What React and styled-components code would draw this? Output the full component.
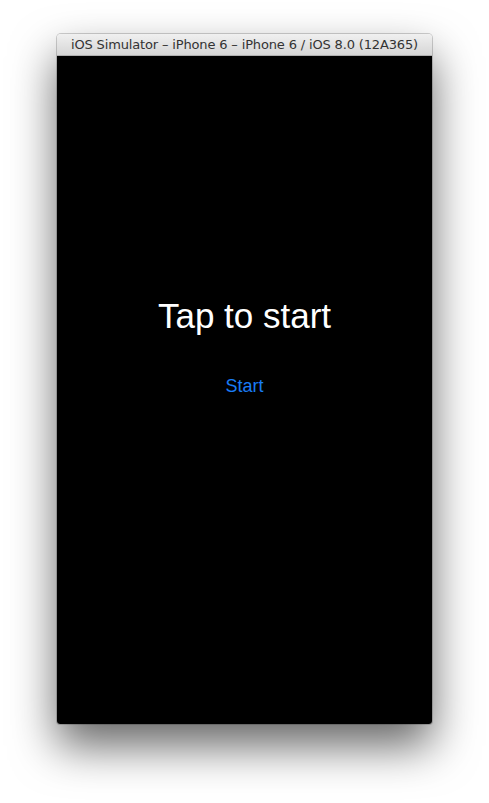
import React from "react";
import styled, { createGlobalStyle } from "styled-components";

const GlobalStyle = createGlobalStyle`
  html, body {
    margin: 0;
    padding: 0;
    background: #ffffff;
  }
`;

const Page = styled.div`
  width: 489px;
  height: 803px;
  display: flex;
  justify-content: center;
  padding-top: 34px;
  box-sizing: border-box;
`;

const Window = styled.div`
  width: 375px;
  display: flex;
  flex-direction: column;
  border-radius: 4px 4px 3px 3px;
  box-shadow: 0 22px 45px rgba(0, 0, 0, 0.6), 0 0 0 1px rgba(0, 0, 0, 0.18);
  height: 690px;
  overflow: hidden;
`;

const TitleBar = styled.div`
  height: 22px;
  flex-shrink: 0;
  display: flex;
  align-items: center;
  justify-content: center;
  background: linear-gradient(#f0f0f0, #d6d6d6);
  border-bottom: 1px solid #b0b0b0;
  box-sizing: border-box;
  font-family: "DejaVu Sans", sans-serif;
  font-size: 13px;
  color: #333333;
  letter-spacing: -0.15px;
`;

const Screen = styled.div`
  flex: 1;
  background: #000000;
  display: flex;
  flex-direction: column;
  align-items: center;
  font-family: "Liberation Sans", Arial, sans-serif;
`;

const Heading = styled.div`
  margin-top: 240px;
  color: #ffffff;
  font-size: 35px;
  line-height: 40px;
`;

const StartButton = styled.button`
  margin-top: 40px;
  background: none;
  border: none;
  padding: 0;
  font-family: inherit;
  font-size: 18px;
  color: #1a7cf5;
  cursor: pointer;
`;

const App = () => {
  return (
    <Page>
      <GlobalStyle />
      <Window>
        <TitleBar>iOS Simulator – iPhone 6 – iPhone 6 / iOS 8.0 (12A365)</TitleBar>
        <Screen>
          <Heading>Tap to start</Heading>
          <StartButton>Start</StartButton>
        </Screen>
      </Window>
    </Page>
  );
};

export default App;
